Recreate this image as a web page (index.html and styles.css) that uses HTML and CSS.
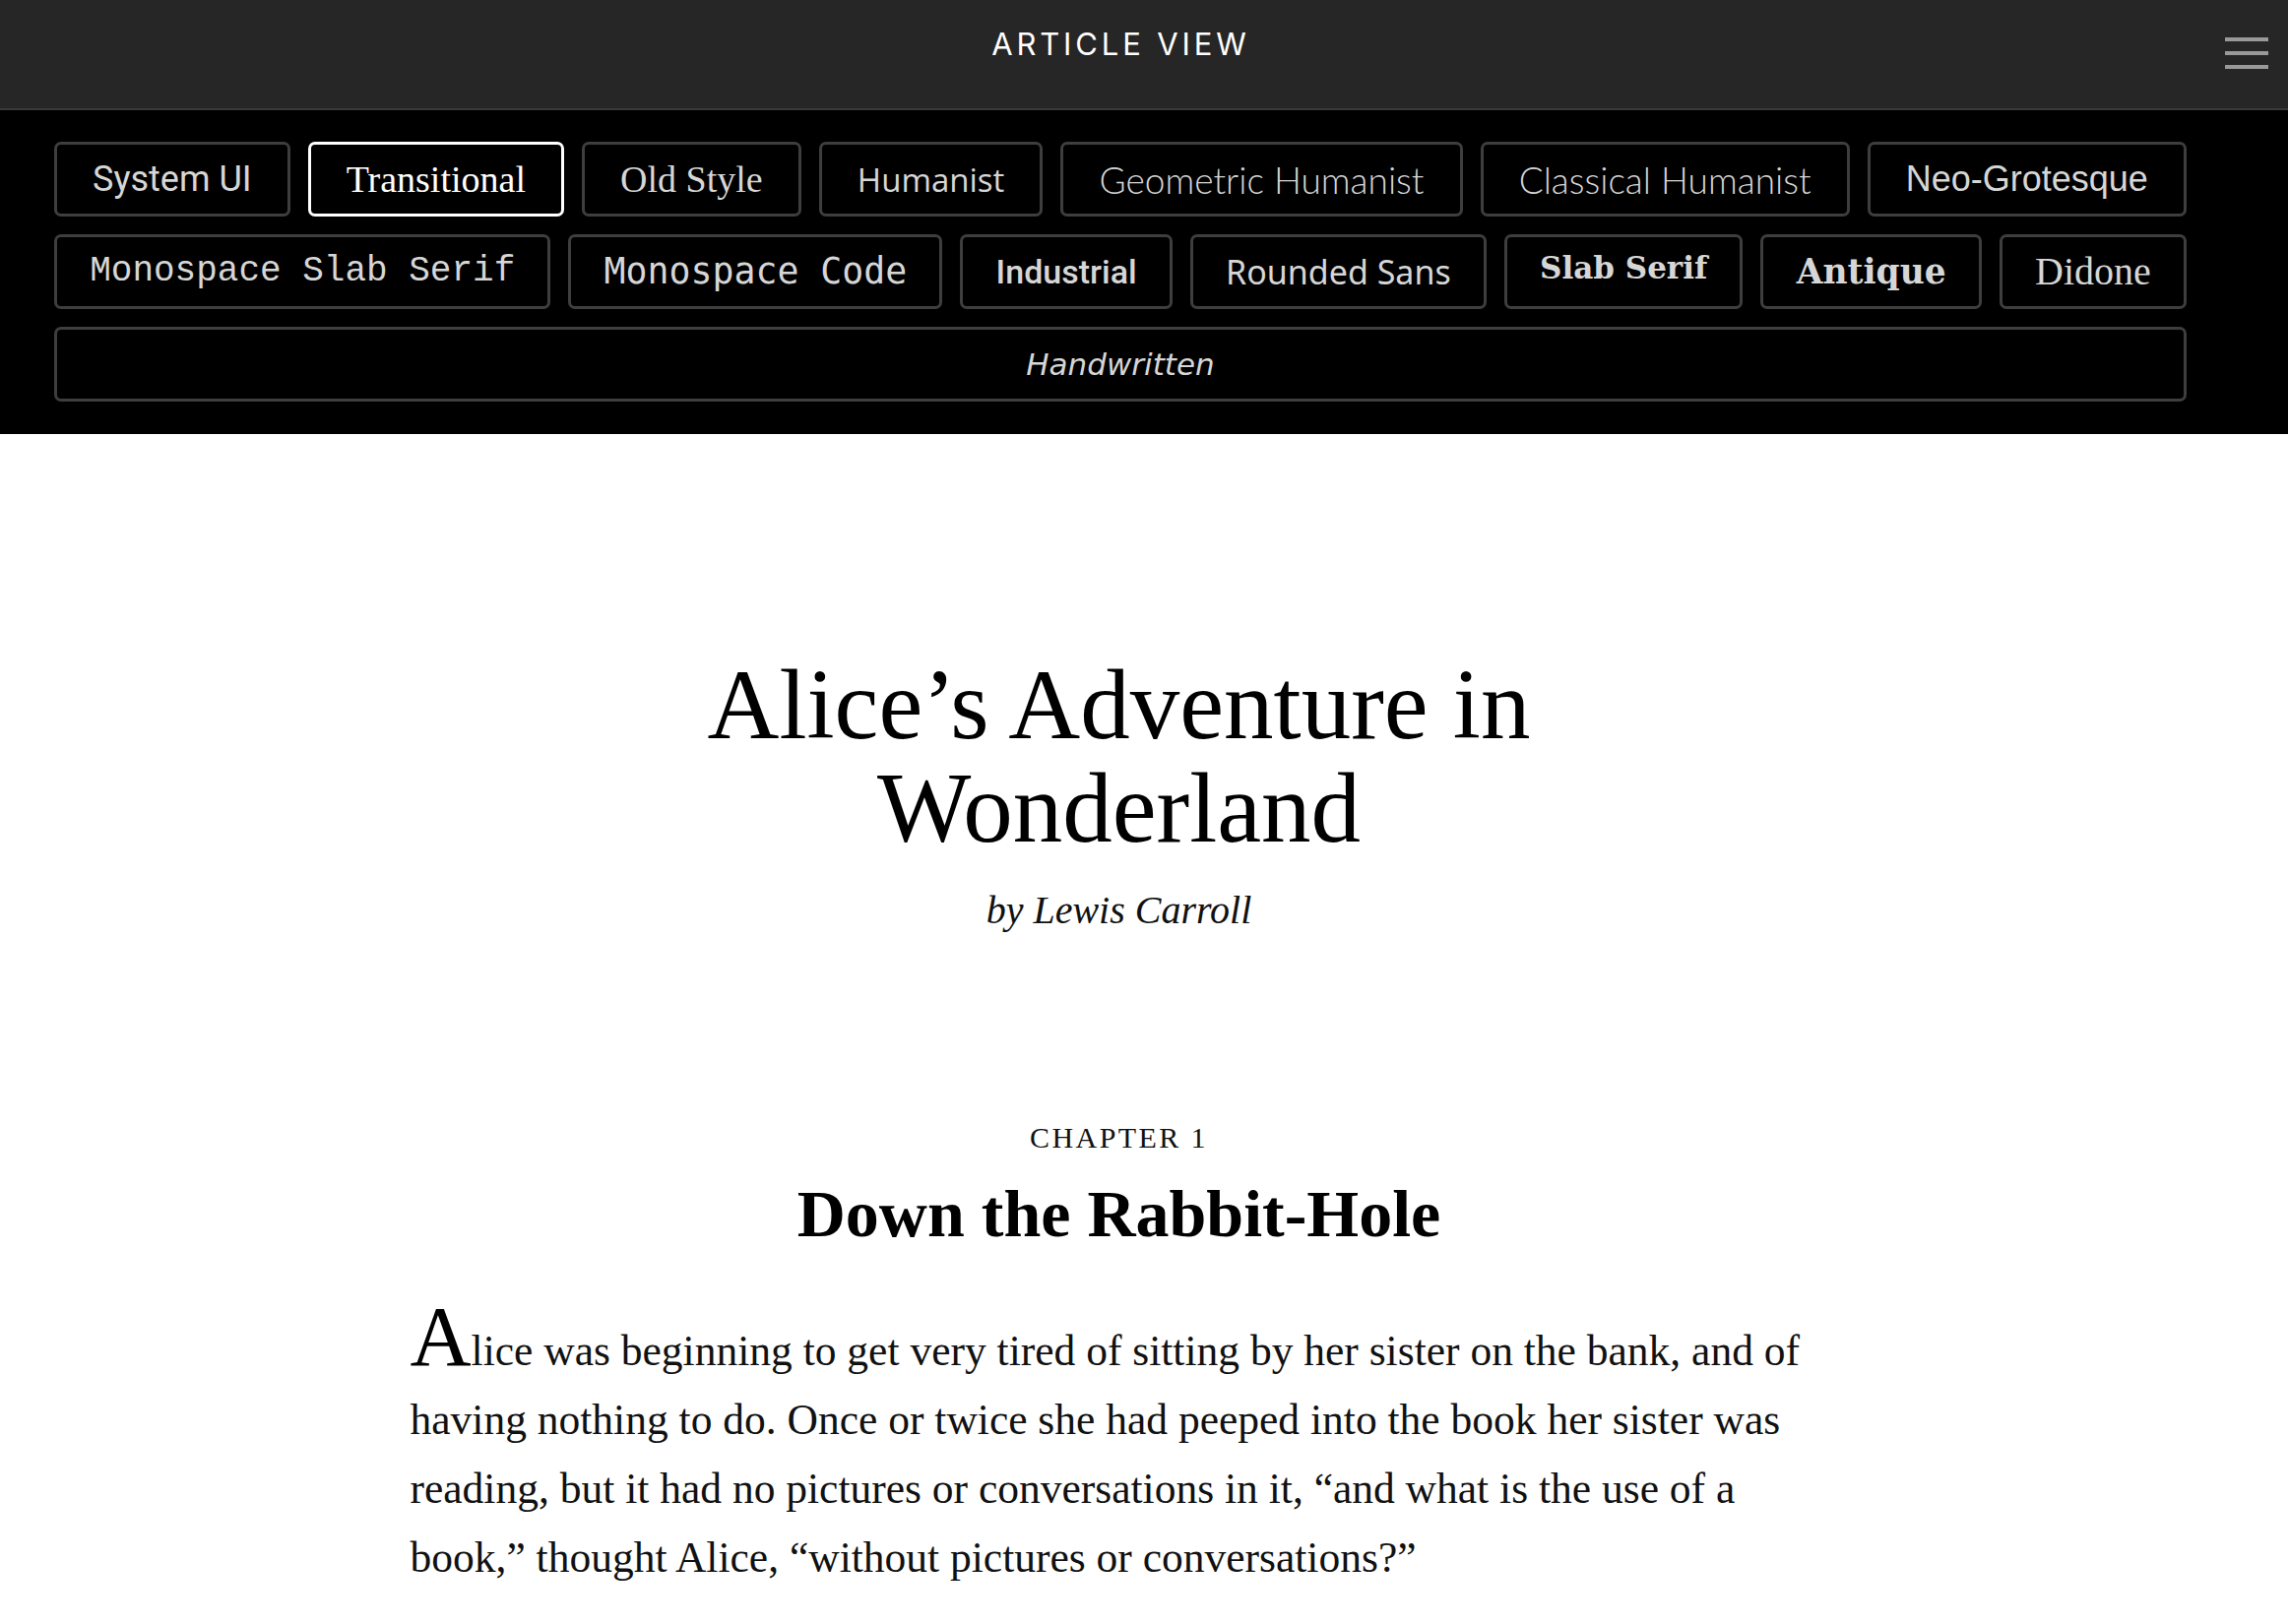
FILE: index.html
```html
<!DOCTYPE html>
<html lang="en">
<head>
<meta charset="utf-8">
<title>Article View</title>
<link rel="stylesheet" href="styles.css">
</head>
<body>
<header class="topbar">
  <div class="topbar-title">Article View</div>
  <button class="menu-btn" aria-label="Menu"><span></span><span></span><span></span></button>
</header>
<nav class="font-picker">
  <div class="font-row">
    <button class="font-btn f-system">System UI</button>
    <button class="font-btn f-transitional is-active">Transitional</button>
    <button class="font-btn f-oldstyle">Old Style</button>
    <button class="font-btn f-humanist">Humanist</button>
    <button class="font-btn f-geometric">Geometric Humanist</button>
    <button class="font-btn f-classical">Classical Humanist</button>
    <button class="font-btn f-neogrot">Neo-Grotesque</button>
  </div>
  <div class="font-row">
    <button class="font-btn f-monoslab">Monospace Slab Serif</button>
    <button class="font-btn f-monocode">Monospace Code</button>
    <button class="font-btn f-industrial">Industrial</button>
    <button class="font-btn f-rounded">Rounded Sans</button>
    <button class="font-btn f-slab">Slab Serif</button>
    <button class="font-btn f-antique">Antique</button>
    <button class="font-btn f-didone">Didone</button>
  </div>
  <div class="font-row">
    <button class="font-btn f-hand">Handwritten</button>
  </div>
</nav>
<main class="page">
  <article class="article">
    <header class="article-head">
      <h1 class="article-title">Alice’s Adventure in Wonderland</h1>
      <p class="byline">by Lewis Carroll</p>
    </header>
    <section class="chapter">
      <p class="chapter-num">Chapter 1</p>
      <h2 class="chapter-title">Down the Rabbit-Hole</h2>
      <p class="para dropcap">Alice was beginning to get very tired of sitting by her sister on the bank, and of having nothing to do. Once or twice she had peeped into the book her sister was reading, but it had no pictures or conversations in it, “and what is the use of a book,” thought Alice, “without pictures or conversations?”</p>
    </section>
  </article>
</main>
</body>
</html>
```
FILE: styles.css
```css
* { box-sizing: border-box; }

html, body {
  margin: 0;
  padding: 0;
  background: #ffffff;
}

body {
  font-family: "Liberation Serif", serif;
  color: #111111;
}

/* ---------- top bar ---------- */
.topbar {
  position: relative;
  height: 112px;
  background: #262626;
  border-bottom: 2px solid #3a3a3a;
  padding: 24px 51px 0 0;
  text-align: center;
}

.topbar-title {
  font-family: "Inter", "Liberation Sans", sans-serif;
  font-size: 31px;
  line-height: 42px;
  letter-spacing: 0.125em;
  text-transform: uppercase;
  color: #ffffff;
  padding-left: 0.125em;
}

.menu-btn {
  position: absolute;
  top: 38px;
  right: 20px;
  display: flex;
  flex-direction: column;
  gap: 10px;
  padding: 0;
  margin: 0;
  border: 0;
  background: transparent;
  cursor: pointer;
}

.menu-btn span {
  display: block;
  width: 44px;
  height: 4px;
  background: #999999;
}

/* ---------- font picker ---------- */
.font-picker {
  background: #000000;
  padding: 32px 103px 33px 55px;
  display: flex;
  flex-direction: column;
  gap: 18px;
}

.font-row {
  display: flex;
  gap: 18px;
}

.font-btn {
  flex: 1 1 auto;
  height: 76px;
  margin: 0;
  padding: 0 31px;
  border: 3px solid #3e3e3e;
  border-radius: 7px;
  background: #000000;
  color: #d6d6d6;
  font-size: 36px;
  line-height: 1;
  white-space: nowrap;
  cursor: pointer;
}

.font-btn.is-active {
  border-color: #ffffff;
  color: #ffffff;
}

.f-system { font-family: "Roboto", sans-serif; }
.f-transitional { font-family: "Liberation Serif", serif; font-size: 38px; }
.f-oldstyle { font-family: "Liberation Serif", serif; font-size: 38px; }
.f-humanist { font-family: "Open Sans", sans-serif; font-size: 33px; }
.f-geometric { font-family: "Lato", sans-serif; font-weight: 300; font-size: 37px; }
.f-classical { font-family: "Lato", sans-serif; font-weight: 300; font-size: 37px; }
.f-neogrot { font-family: "Liberation Sans", sans-serif; font-size: 36px; }
.f-monoslab { font-family: "Liberation Mono", monospace; font-size: 36px; }
.f-monocode { font-family: "DejaVu Sans Mono", monospace; font-size: 36.5px; }
.f-industrial { font-family: "Roboto", sans-serif; font-weight: 500; font-size: 34px; }
.f-rounded { font-family: "Noto Sans", sans-serif; font-size: 34px; }
.f-slab { font-family: "DejaVu Serif", serif; font-weight: 700; font-size: 31px; padding-bottom: 8px; }
.f-antique { font-family: "DejaVu Serif", serif; font-weight: 700; font-size: 34.5px; }
.f-didone { font-family: "Liberation Serif", serif; font-size: 40px; }
.f-hand { font-family: "DejaVu Sans", sans-serif; font-style: italic; font-size: 31px; }

/* ---------- article ---------- */
.page {
  padding: 223px 51px 80px 0;
}

.article {
  max-width: 1440px;
  margin: 0 auto;
}

.article-head {
  text-align: center;
}

.article-title {
  max-width: 1000px;
  margin: 0 auto;
  font-size: 101px;
  line-height: 105px;
  font-weight: 400;
  color: #000000;
}

.byline {
  margin: 23px 0 0;
  font-size: 40px;
  line-height: 56px;
  font-style: italic;
}

.chapter {
  margin-top: 182px;
}

.chapter-num {
  margin: 0;
  text-align: center;
  font-size: 30px;
  line-height: 42px;
  letter-spacing: 0.08em;
  text-transform: uppercase;
}

.chapter-title {
  margin: 19px 0 0;
  text-align: center;
  font-size: 68px;
  line-height: 74px;
  font-weight: 700;
  color: #000000;
}

.para {
  margin: 67px 0 0;
  font-size: 43.5px;
  line-height: 70px;
}

.dropcap::first-letter {
  font-size: 86px;
  line-height: 0;
  color: #000000;
}
```
